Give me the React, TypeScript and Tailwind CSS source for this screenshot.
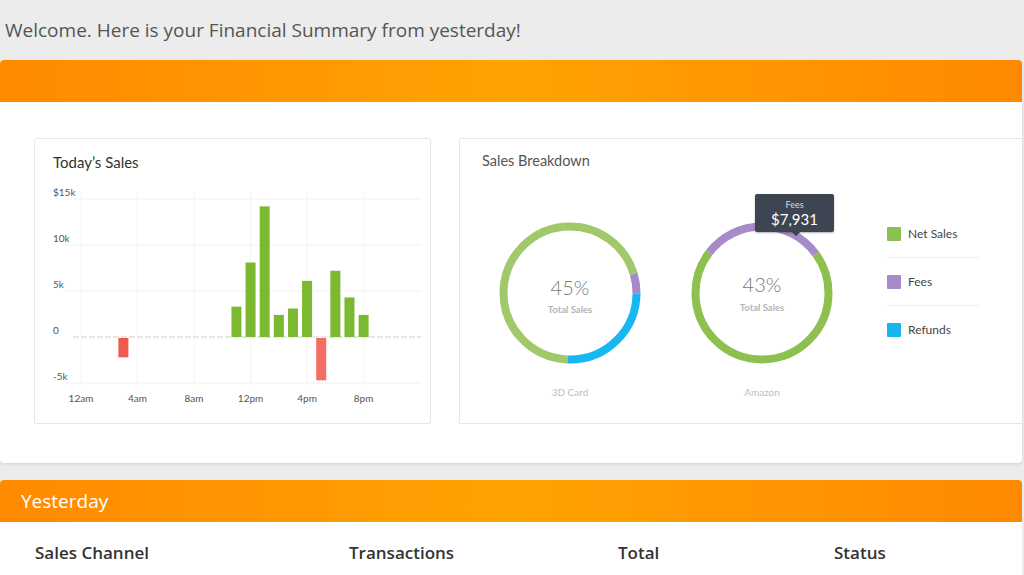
import React from 'react';

const bars = [
  { h: 3, v: -2.1, c: '#ef5a4c' },
  { h: 11, v: 3.3, c: '#7db930' },
  { h: 12, v: 8.1, c: '#7db930' },
  { h: 13, v: 14.2, c: '#7db930' },
  { h: 14, v: 2.4, c: '#7db930' },
  { h: 15, v: 3.1, c: '#7db930' },
  { h: 16, v: 6.1, c: '#7db930' },
  { h: 17, v: -4.6, c: '#f36f63' },
  { h: 18, v: 7.2, c: '#7db930' },
  { h: 19, v: 4.3, c: '#7db930' },
  { h: 20, v: 2.4, c: '#7db930' },
];

const yTicks = [
  { label: '$15k', y: 27 },
  { label: '10k', y: 73 },
  { label: '5k', y: 119 },
  { label: '0', y: 165 },
  { label: '-5k', y: 211 },
];

const xTicks = ['12am', '4am', '8am', '12pm', '4pm', '8pm'];

const hourX = (h: number) => 46 + h * 14.13;

const SalesChart = () => (
  <svg width="395" height="252" className="block">
    {xTicks.map((_, i) => (
      <line key={i} x1={hourX(i * 4)} x2={hourX(i * 4)} y1={20} y2={214} stroke="#f4f4f4" />
    ))}
    {yTicks.map(t =>
      t.label === '0' ? null : (
        <line key={t.label} x1={28} x2={386} y1={t.y} y2={t.y} stroke="#f0f0f0" />
      )
    )}
    <line x1={38} x2={386} y1={165} y2={165} stroke="#dedede" strokeWidth={1.5} strokeDasharray="6 2" />
    {yTicks.map(t => (
      <text key={t.label} x={18} y={t.y - 3} fontSize={10} fill="#555">
        {t.label}
      </text>
    ))}
    {xTicks.map((l, i) => (
      <text key={l} x={hourX(i * 4)} y={230} fontSize={10} fill="#555" textAnchor="middle">
        {l}
      </text>
    ))}
    {bars.map(b => {
      const hgt = Math.abs(b.v) * 9.2;
      return (
        <rect
          key={b.h}
          x={hourX(b.h) - 5}
          y={b.v >= 0 ? 165 - hgt : 166}
          width={10}
          height={hgt}
          fill={b.c}
        />
      );
    })}
  </svg>
);

const R = 66.5;
const C = 2 * Math.PI * R;

interface Seg {
  from: number;
  to: number;
  color: string;
}

// segments are in degrees clockwise from 12 o'clock, each inside 0..360
const Donut = ({ segs }: { segs: Seg[] }) => (
  <svg width="144" height="144" className="block">
    {segs.map((s, i) => {
      const len = ((s.to - s.from) / 360) * C;
      return (
        <circle
          key={i}
          cx={72}
          cy={72}
          r={R}
          fill="none"
          stroke={s.color}
          strokeWidth={8}
          strokeDasharray={`${len} ${C}`}
          strokeDashoffset={-(s.from / 360) * C}
          transform="rotate(-90 72 72)"
        />
      );
    })}
  </svg>
);

const legend = [
  { label: 'Net Sales', color: '#8cc04f' },
  { label: 'Fees', color: '#a78bc8' },
  { label: 'Refunds', color: '#17b4f0' },
];

const App = () => {
  return (
    <div className="w-[1024px] h-[575px] overflow-hidden bg-[#ececec] font-['Open_Sans',sans-serif]">
      <div className="h-[60px] flex items-center pl-[5px] text-[19px] text-[#555]">
        Welcome. Here is your Financial Summary from yesterday!
      </div>

      <div className="w-[1022px] rounded-[4px] bg-white shadow-[0_1px_3px_rgba(0,0,0,0.12)] overflow-hidden">
        <div className="h-[42px] bg-linear-to-r from-[#ff8a00] via-[#ffa303] to-[#ff8900]" />
        <div className="flex gap-[28px] pl-[34px] pt-[36px] pb-[39px] font-['Lato',sans-serif]">
          <div className="w-[397px] h-[286px] border border-[#e6e6e6] rounded-[2px] shrink-0">
            <div className="px-[18px] pt-[13px] text-[15px] leading-[20px] text-[#333]">Today’s Sales</div>
            <SalesChart />
          </div>

          <div className="flex-1 h-[286px] border border-r-0 border-[#e6e6e6] rounded-l-[2px]">
            <div className="px-[22px] pt-[12px] text-[14.5px] leading-[20px] text-[#555]">Sales Breakdown</div>
            <div className="flex items-start pl-[38px] mt-[39px]">
              <div className="w-[144px] mt-[11px] flex flex-col items-center">
                <div className="relative">
                  <Donut
                    segs={[
                      { from: 182, to: 360, color: '#a1c86b' },
                      { from: 0, to: 73, color: '#a1c86b' },
                      { from: 73, to: 90, color: '#a78bc8' },
                      { from: 90, to: 182, color: '#17b8f2' },
                    ]}
                  />
                  <div className="absolute left-0 right-0 top-[54px] text-center text-[20px] leading-[24px] font-light text-[#777]">
                    45%
                  </div>
                  <div className="absolute left-0 right-0 top-[83px] text-center text-[9.5px] leading-[12px] font-bold text-[#b5b5b5]">
                    Total Sales
                  </div>
                </div>
                <div className="mt-[20px] text-[10px] leading-[14px] text-[#bdbdbd]">3D Card</div>
              </div>

              <div className="w-[144px] ml-[48px] mt-[11px] flex flex-col items-center">
                <div className="relative">
                  <Donut
                    segs={[
                      { from: 54, to: 307, color: '#8dc04f' },
                      { from: 307, to: 360, color: '#a78bc8' },
                      { from: 0, to: 54, color: '#a78bc8' },
                    ]}
                  />
                  <div className="absolute left-0 right-0 top-[51px] text-center text-[20px] leading-[24px] font-light text-[#777]">
                    43%
                  </div>
                  <div className="absolute left-0 right-0 top-[81px] text-center text-[9.5px] leading-[12px] font-bold text-[#b5b5b5]">
                    Total Sales
                  </div>
                  <div className="absolute left-[65px] top-[-27px] w-[79px] h-[38px] rounded-[2px] bg-[#3e4552] flex flex-col items-center justify-center shadow-[0_1px_2px_rgba(0,0,0,0.3)]">
                    <div className="text-[9px] leading-[11px] text-[#d7dae0]">Fees</div>
                    <div className="text-[15px] leading-[18px] text-white">$7,931</div>
                    <div className="absolute bottom-[-3px] left-[38px] w-[6px] h-[6px] rotate-45 bg-[#3e4552]" />
                  </div>
                </div>
                <div className="mt-[20px] text-[10px] leading-[14px] text-[#bdbdbd]">Amazon</div>
              </div>

              <div className="ml-[53px] w-[93px] flex flex-col">
                {legend.map((l, i) => (
                  <div
                    key={l.label}
                    className={`h-[48px] flex items-center gap-[7px] ${i < 2 ? 'border-b border-[#efefef]' : ''}`}
                  >
                    <span className="w-[14px] h-[14px] rounded-[1px]" style={{ backgroundColor: l.color }} />
                    <span className="text-[12px] text-[#444]">{l.label}</span>
                  </div>
                ))}
              </div>
            </div>
          </div>
        </div>
      </div>

      <div className="w-[1022px] mt-[17px] rounded-t-[4px] bg-white overflow-hidden">
        <div className="h-[42px] flex items-center pl-[21px] bg-linear-to-r from-[#ff8a00] via-[#ffa303] to-[#ff8900] text-[19px] text-white">
          Yesterday
        </div>
        <div className="h-[62px] flex items-center pl-[35px] text-[17px] font-semibold text-[#333]">
          <div className="w-[314px]">Sales Channel</div>
          <div className="w-[269px]">Transactions</div>
          <div className="w-[216px]">Total</div>
          <div>Status</div>
        </div>
      </div>
    </div>
  );
};

export default App;
